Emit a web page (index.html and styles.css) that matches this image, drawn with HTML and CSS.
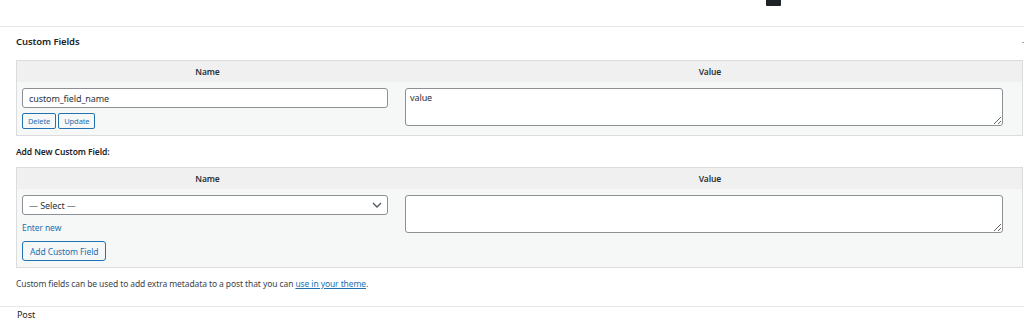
FILE: index.html
```html
<!doctype html>
<html lang="en">
	<head>
	<meta charset="utf-8">
	<title>Custom Fields</title>
	<link rel="stylesheet" href="styles.css">
	</head>
	<body>

		<div class="topbar"><span class="tip-box"></span></div>

		<section class="postbox">
			<div class="postbox-header">
				<h2>Custom Fields</h2>
				<span class="toggle-dot"></span>
			</div>

			<div class="inside">
				<table class="meta-table">
					<thead>
						<tr>
							<th class="col-name">Name</th>
							<th class="col-value">Value</th>
						</tr>
					</thead>
					<tbody>
						<tr>
							<td class="cell-name">
								<input type="text" class="field" value="custom_field_name">
								<div class="actions">
									<button class="btn btn-small">Delete</button>
									<button class="btn btn-small">Update</button>
								</div>
							</td>
							<td class="cell-value">
								<textarea class="area">value</textarea>
							</td>
						</tr>
					</tbody>
				</table>

				<p class="add-title">Add New Custom Field:</p>

				<table class="meta-table">
					<thead>
						<tr>
							<th class="col-name">Name</th>
							<th class="col-value">Value</th>
						</tr>
					</thead>
					<tbody>
						<tr>
							<td class="cell-name">
								<span class="select-wrap">
									<select class="field select">
										<option>&mdash; Select &mdash;</option>
									</select>
									<svg class="chevron" width="10" height="6" viewBox="0 0 10 6"><path d="M1 1l4 4 4-4" fill="none" stroke="#50575e" stroke-width="1.3"/></svg>
								</span>
								<a href="#" class="enter-new">Enter new</a>
								<div class="actions add-actions">
									<button class="btn">Add Custom Field</button>
								</div>
							</td>
							<td class="cell-value">
								<textarea class="area"></textarea>
							</td>
						</tr>
					</tbody>
				</table>

				<p class="note">Custom fields can be used to add extra metadata to a post that you can <a href="#">use in your theme</a>.</p>
			</div>
		</section>

		<div class="next-box">Post</div>

	</body>
</html>
```

FILE: styles.css
```css
body {
	margin: 0;
	font-family: "Noto Sans", "Open Sans", sans-serif;
	font-size: 8.5px;
	letter-spacing: -0.1px;
	color: #1d2327;
	background: #fff;
}

.topbar {
	height: 26px;
}

.tip-box {
	display: block;
	margin-left: 766px;
	width: 15px;
	height: 6px;
	background: #1d2327;
	border-radius: 0 0 1px 1px;
}

.postbox {
	border-top: 1px solid #e5e5e7;
}

.postbox-header {
	display: flex;
	align-items: center;
	justify-content: space-between;
	height: 33px;
	padding-left: 16px;
}

.postbox-header h2 {
	margin: -3px 0 0;
	font-size: 9.5px;
	font-weight: 600;
	color: #1d2327;
	line-height: 1;
}

.toggle-dot {
	width: 2px;
	height: 1px;
	background: #a7aaad;
	margin-top: -3px;
}

.inside {
	padding-left: 16px;
}

.meta-table {
	width: 1007px;
	border: 1px solid #dcdcde;
	border-spacing: 0;
	table-layout: fixed;
	background: #f6f7f7;
}

.meta-table th {
	background: #f0f0f0;
	height: 21px;
	padding: 0;
	font-size: 8.5px;
	font-weight: 600;
	color: #2c3338;
	text-align: center;
}

.col-name {
	width: 381px;
}

.meta-table td {
	vertical-align: top;
	padding: 6px 0 6px;
}

.cell-name {
	padding-left: 5px !important;
	padding-right: 9px !important;
}

.cell-value {
	padding-left: 7px !important;
	padding-right: 20px !important;
}

.field {
	box-sizing: border-box;
	display: block;
	width: 366px;
	height: 20px;
	margin: 0;
	padding: 0 6px;
	border: 1px solid #8c8f94;
	border-radius: 3px;
	background: #fff;
	font-family: inherit;
	font-size: 9px;
	letter-spacing: -0.1px;
	color: #2c3338;
}

.select-wrap {
	position: relative;
	display: block;
	width: 366px;
}

.select {
	-webkit-appearance: none;
	appearance: none;
	padding-left: 6px;
}

.chevron {
	position: absolute;
	top: 7px;
	right: 6px;
}

.enter-new {
	display: block;
	margin-top: 6px;
	line-height: 13px;
	color: #2271b1;
	text-decoration: none;
	font-size: 8.5px;
}

.actions {
	display: flex;
	gap: 2px;
	margin-top: 5px;
}

.add-actions {
	margin-top: 7px;
}

.btn {
	box-sizing: border-box;
	height: 20px;
	padding: 0 7px;
	border: 1px solid #2271b1;
	border-radius: 3px;
	background: #f6f7f7;
	color: #2271b1;
	font-family: inherit;
	font-size: 8.5px;
	letter-spacing: -0.1px;
	cursor: pointer;
}

.btn-small {
	height: 16px;
	padding: 0 5px;
	font-size: 7.5px;
	border-radius: 2px;
}

.area {
	box-sizing: border-box;
	display: block;
	width: 598px;
	height: 38px;
	margin: 0;
	padding: 2px 4px;
	border: 1px solid #8c8f94;
	border-radius: 3px;
	background: #fff;
	font-family: inherit;
	font-size: 9px;
	letter-spacing: -0.1px;
	color: #2c3338;
}

.add-title {
	margin: 0;
	height: 31px;
	line-height: 31px;
	font-weight: 600;
	font-size: 8.5px;
	color: #1d2327;
}

.note {
	margin: 0;
	height: 38px;
	line-height: 32px;
	color: #3c434a;
}

.note a {
	color: #2271b1;
}

.next-box {
	border-top: 1px solid #e5e5e7;
	padding: 2px 0 0 17px;
	font-size: 9px;
	line-height: 12px;
	color: #1d2327;
}
```
